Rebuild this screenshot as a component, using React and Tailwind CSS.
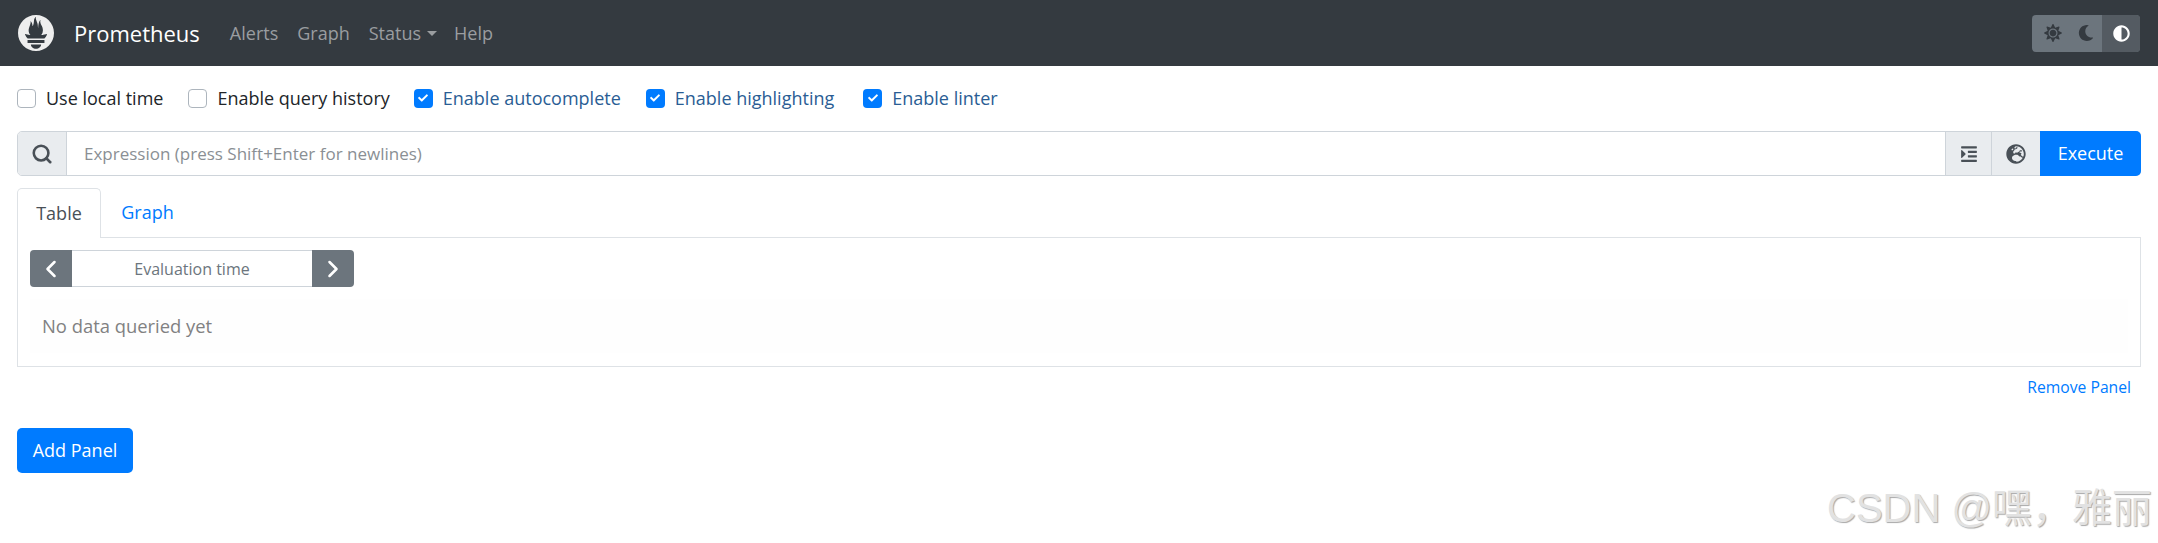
import React from 'react';
import { FaSun, FaMoon, FaAdjust, FaIndent, FaGlobeEurope, FaCheck } from 'react-icons/fa';
import { SiPrometheus } from 'react-icons/si';
import { Search, ChevronLeft, ChevronRight } from 'lucide-react';

const Check = ({ label, checked, className }) => (
  <label className={`flex items-center gap-[10px] ${className}`}>
    {checked ? (
      <span className="w-[19px] h-[19px] rounded-[4px] bg-[#007bff] flex items-center justify-center text-white">
        <FaCheck className="w-[10px] h-[10px]" />
      </span>
    ) : (
      <span className="w-[19px] h-[19px] rounded-[4px] bg-white border border-[#adb5bd]" />
    )}
    <span className={checked ? 'text-[#2a5d94]' : 'text-[#212529]'}>{label}</span>
  </label>
);

const App = () => {
  return (
    <div className="relative w-full h-[543px] bg-white overflow-hidden text-[18px] text-[#212529] font-['Open_Sans','Noto_Sans_CJK_SC',sans-serif]">
      <nav className="h-[66px] bg-[#343a40] flex items-center pl-[18px] pr-[18px]">
        <SiPrometheus className="w-[36px] h-[36px] text-[#eeeeee]" />
        <span className="ml-[20px] text-[22px] text-white">Prometheus</span>
        <div className="ml-[30px] flex items-center gap-[18px] text-[#9a9da0]">
          <span>Alerts</span>
          <span className="ml-px">Graph</span>
          <span className="ml-px flex items-center gap-[6px]">
            Status
            <span className="w-0 h-0 border-x-[5px] border-x-transparent border-t-[5px] border-t-[#9a9da0]" />
          </span>
          <span className="-ml-px">Help</span>
        </div>
        <div className="ml-auto flex h-[37px] w-[108px] pl-[3px] rounded-[4px] overflow-hidden bg-[#6c757d] text-[#343a40]">
          <div className="w-[35px] flex items-center justify-center"><FaSun className="w-[18px] h-[18px]" /></div>
          <div className="w-[32px] flex items-center justify-center"><FaMoon className="w-[16px] h-[16px]" /></div>
          <div className="flex-1 bg-[#545b62] flex items-center justify-center text-white"><FaAdjust className="w-[17px] h-[17px]" /></div>
        </div>
      </nav>

      <div className="pl-[17px] pr-[17px]">
        <div className="flex items-center h-[22px] mt-[21px]">
          <Check label="Use local time" />
          <Check label="Enable query history" className="ml-[25px]" />
          <Check label="Enable autocomplete" checked className="ml-[24px]" />
          <Check label="Enable highlighting" checked className="ml-[25px]" />
          <Check label="Enable linter" checked className="ml-[29px]" />
        </div>

        <div className="flex h-[45px] mt-[22px] rounded-[5px] border border-[#ced4da]">
          <div className="w-[49px] bg-[#e9ecef] border-r border-[#ced4da] rounded-l-[4px] flex items-center justify-center text-[#495057]">
            <Search size={22} strokeWidth={2.8} />
          </div>
          <div className="flex-1 flex items-center pl-[17px] text-[17px] text-[#8a8f94]">Expression (press Shift+Enter for newlines)</div>
          <div className="w-[47px] bg-[#e9ecef] border-x border-[#ced4da] flex items-center justify-center text-[#495057]">
            <FaIndent className="w-[18px] h-[18px]" />
          </div>
          <div className="w-[48px] bg-[#e9ecef] flex items-center justify-center text-[#495057]">
            <FaGlobeEurope className="w-[20px] h-[20px]" />
          </div>
          <div className="w-[101px] -my-px -mr-px bg-[#007bff] rounded-r-[5px] text-white flex items-center justify-center">Execute</div>
        </div>

        <div className="flex h-[49px] mt-[12px]">
          <div className="w-[84px] -mb-px z-10 bg-white border border-b-0 border-[#dee2e6] rounded-t-[5px] flex items-center justify-center text-[#495057]">Table</div>
          <div className="w-[90px] pl-[3px] flex items-center justify-center text-[#007bff]">Graph</div>
        </div>

        <div className="h-[130px] border border-[#dee2e6] px-[12px] pt-[12px]">
          <div className="flex w-[324px] h-[37px] text-[16px] text-[#6c757d]">
            <div className="w-[42px] bg-[#6c757d] rounded-l-[4px] flex items-center justify-center text-white"><ChevronLeft size={28} strokeWidth={2.2} /></div>
            <div className="flex-1 border-y border-[#ced4da] flex items-center justify-center">Evaluation time</div>
            <div className="w-[42px] bg-[#6c757d] rounded-r-[4px] flex items-center justify-center text-white"><ChevronRight size={28} strokeWidth={2.2} /></div>
          </div>
          <div className="h-[54px] mt-[12px] bg-[#fefefe] pl-[12px] flex items-center text-[18.4px] text-[#818182]">No data queried yet</div>
        </div>

        <div className="flex justify-end pr-[10px] mt-[9px] text-[15.7px] text-[#007bff] leading-[22px]">Remove Panel</div>

        <div className="w-[116px] h-[45px] mt-[30px] bg-[#007bff] rounded-[5px] text-white flex items-center justify-center">Add Panel</div>
      </div>

      <div className="absolute left-[1827px] top-[480px] text-[40px] leading-[56px] text-[#e2e2e2] [text-shadow:1px_1px_1px_#a8a8a8] font-['Liberation_Sans','Noto_Sans_CJK_SC',sans-serif] whitespace-nowrap">CSDN @嘿，雅丽</div>
    </div>
  );
};

export default App;
